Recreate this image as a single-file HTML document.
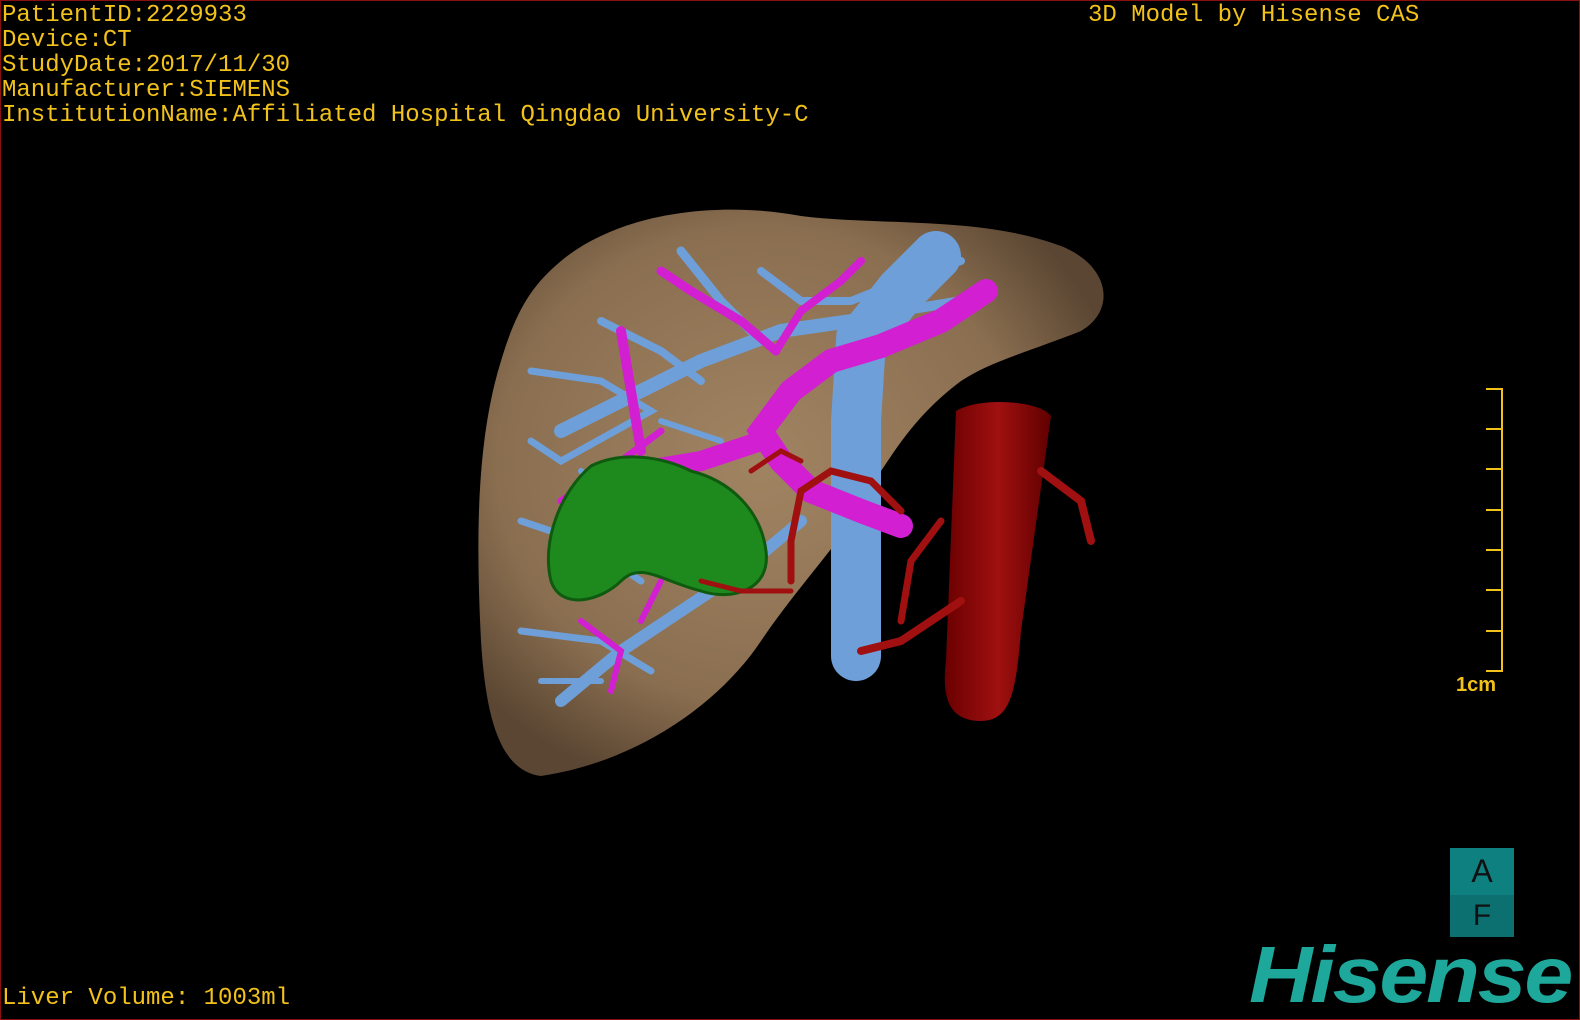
<!DOCTYPE html>
<html><head><meta charset="utf-8"><style>
html,body{margin:0;padding:0;background:#000;}
#c{position:relative;width:1578px;height:1018px;border:1px solid #8a1010;overflow:hidden;background:#000;}
.t{position:absolute;color:#f2c21a;font-family:"Liberation Mono",monospace;font-size:24px;line-height:25px;white-space:pre;}
</style></head><body><div id="c">
<svg width="1578" height="1018" style="position:absolute;left:0;top:0">
<defs>
<radialGradient id="lv" cx="45%" cy="45%" r="60%"><stop offset="0" stop-color="#a08462"/><stop offset="0.7" stop-color="#8a6e50"/><stop offset="1" stop-color="#5a4632"/></radialGradient>
<linearGradient id="rd" x1="0" x2="1"><stop offset="0" stop-color="#6a0000"/><stop offset="0.5" stop-color="#a01010"/><stop offset="1" stop-color="#600000"/></linearGradient>
</defs>
<path d="M560 260 C620 210 720 200 800 215 C880 225 980 215 1060 245 C1110 265 1115 310 1080 330 C1030 350 990 360 960 380 C920 410 900 440 880 470 C860 520 800 580 760 640 C720 700 640 760 540 775 C500 770 485 720 480 640 C475 540 475 440 500 360 C515 310 530 285 560 260 Z" fill="url(#lv)"/>
<g stroke="#6f9fd8" stroke-linecap="round" fill="none">
<path d="M855 655 L855 420 L860 340 L900 290 L935 255" stroke-width="50"/>
<path d="M850 320 L780 330 L700 360 L620 400 L560 430" stroke-width="14"/>
<path d="M680 250 L720 300 L760 340" stroke-width="9"/>
<path d="M600 320 L660 350 L700 380" stroke-width="8"/>
<path d="M530 370 L600 380 L650 410 L560 460 L530 440" stroke-width="7"/>
<path d="M760 270 L800 300 L850 300 L900 280 L960 260" stroke-width="8"/>
<path d="M960 300 L900 310 L870 330" stroke-width="10"/>
<path d="M800 520 L740 570 L680 610 L620 650 L560 700" stroke-width="12"/>
<path d="M520 630 L600 640 L650 670" stroke-width="7"/>
<path d="M520 520 L580 540 L640 580" stroke-width="7"/>
<path d="M540 680 L600 680" stroke-width="6"/>
<path d="M660 420 L720 440" stroke-width="6"/>
<path d="M580 470 L620 500" stroke-width="6"/>
</g>
<g stroke="#d21fd2" stroke-linecap="round" fill="none">
<path d="M900 525 L860 510 L810 490 L780 460 L760 430 L790 390 L830 360 L880 345 L940 320 L985 290" stroke-width="24"/>
<path d="M760 440 L700 460 L640 470" stroke-width="20"/>
<path d="M775 350 L740 320 L690 290 L660 270" stroke-width="9"/>
<path d="M775 350 L800 310 L840 280 L860 260" stroke-width="8"/>
<path d="M620 330 L630 390 L640 450" stroke-width="10"/>
<path d="M660 430 L620 460 L560 500" stroke-width="7"/>
<path d="M580 620 L620 650 L610 690" stroke-width="6"/>
<path d="M660 580 L640 620" stroke-width="6"/>
</g>
<path d="M590 465 C620 450 660 455 690 470 C730 480 760 510 765 550 C770 590 730 600 700 590 C660 580 640 560 620 580 C600 600 560 610 550 580 C540 540 560 490 590 465 Z" fill="#1e8a1e" stroke="#0f5a0f" stroke-width="3"/>
<path d="M955 410 C980 395 1040 400 1050 415 L1020 630 C1015 690 1010 720 980 720 C950 720 940 700 945 660 Z" fill="url(#rd)"/>
<g stroke="#a01010" fill="none" stroke-linecap="round">
<path d="M860 650 L900 640 L930 620 L960 600" stroke-width="8"/>
<path d="M900 510 L870 480 L830 470 L800 490 L790 540 L790 580" stroke-width="7"/>
<path d="M790 590 L740 590 L700 580" stroke-width="5"/>
<path d="M1040 470 L1080 500 L1090 540" stroke-width="8"/>
<path d="M940 520 L910 560 L900 620" stroke-width="7"/>
<path d="M800 460 L780 450 L750 470" stroke-width="5"/>
</g>
<g stroke="#f2c21a" stroke-width="2">
<line x1="1501" y1="387" x2="1501" y2="671"/>
<line x1="1485" y1="388" x2="1501" y2="388"/><line x1="1485" y1="428" x2="1501" y2="428"/>
<line x1="1485" y1="468" x2="1501" y2="468"/><line x1="1485" y1="509" x2="1501" y2="509"/>
<line x1="1485" y1="549" x2="1501" y2="549"/><line x1="1485" y1="589" x2="1501" y2="589"/>
<line x1="1485" y1="630" x2="1501" y2="630"/><line x1="1485" y1="670" x2="1501" y2="670"/>
</g>
</svg>
<div class="t" style="left:1px;top:2px">PatientID:2229933
Device:CT
StudyDate:2017/11/30
Manufacturer:SIEMENS
InstitutionName:Affiliated Hospital Qingdao University-C</div>
<div class="t" style="left:1087px;top:2px">3D Model by Hisense CAS</div>
<div class="t" style="left:1px;top:985px">Liver Volume: 1003ml</div>
<div style="position:absolute;left:1455px;top:673px;color:#f2c21a;font:bold 20px 'Liberation Sans',sans-serif">1cm</div>
<div style="position:absolute;left:1449px;top:847px;width:64px;height:89px;">
<div style="height:47px;background:#0f8080;color:#111;font:32px 'Liberation Sans',sans-serif;text-align:center;line-height:47px">A</div>
<div style="height:42px;background:#0c7070;color:#111;font:30px 'Liberation Sans',sans-serif;text-align:center;line-height:42px">F</div>
</div>
<div style="position:absolute;left:1248px;top:932px;color:#1ea89c;font:italic bold 80px 'Liberation Sans',sans-serif;letter-spacing:-2px;line-height:84px;transform:scaleX(1.1);transform-origin:left top">Hisense</div>
</div></body></html>
